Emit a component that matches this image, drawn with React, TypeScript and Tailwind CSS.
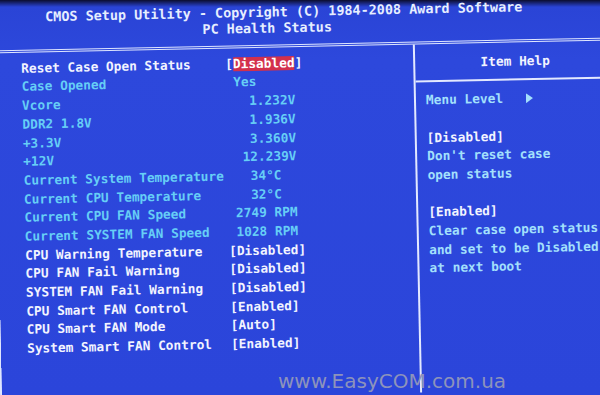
import React from 'react';

type Row = { label: string; value: string; tone: 'white' | 'cyan'; selected?: boolean };

const rows: Row[] = [
  { label: 'Reset Case Open Status', value: '[Disabled]', tone: 'white', selected: true },
  { label: 'Case Opened', value: ' Yes', tone: 'cyan' },
  { label: 'Vcore', value: '   1.232V', tone: 'cyan' },
  { label: 'DDR2 1.8V', value: '   1.936V', tone: 'cyan' },
  { label: '+3.3V', value: '   3.360V', tone: 'cyan' },
  { label: '+12V', value: '  12.239V', tone: 'cyan' },
  { label: 'Current System Temperature', value: '   34°C', tone: 'cyan' },
  { label: 'Current CPU Temperature', value: '   32°C', tone: 'cyan' },
  { label: 'Current CPU FAN Speed', value: ' 2749 RPM', tone: 'cyan' },
  { label: 'Current SYSTEM FAN Speed', value: ' 1028 RPM', tone: 'cyan' },
  { label: 'CPU Warning Temperature', value: '[Disabled]', tone: 'white' },
  { label: 'CPU FAN Fail Warning', value: '[Disabled]', tone: 'white' },
  { label: 'SYSTEM FAN Fail Warning', value: '[Disabled]', tone: 'white' },
  { label: 'CPU Smart FAN Control', value: '[Enabled]', tone: 'white' },
  { label: 'CPU Smart FAN Mode', value: '[Auto]', tone: 'white' },
  { label: 'System Smart FAN Control', value: '[Enabled]', tone: 'white' },
];

// help panel lines, '' = blank row
const help: { text: string; white?: boolean }[] = [
  { text: '' },
  { text: '[Disabled]', white: true },
  { text: "Don't reset case" },
  { text: 'open status' },
  { text: '' },
  { text: '[Enabled]', white: true },
  { text: 'Clear case open status' },
  { text: 'and set to be Disabled' },
  { text: 'at next boot' },
];

const SettingRow: React.FC<{ row: Row }> = ({ row }) => {
  const color = row.tone === 'white' ? 'text-[#f2f4ff]' : 'text-[#66cef6]';
  return (
    <div className={`flex h-[18.7px] items-center whitespace-pre ${color}`}>
      <span className="w-[204px] shrink-0">{row.label}</span>
      {row.selected ? (
        <span className="text-[#f2f4ff]">
          [<span className="inline-block h-[14px] bg-[#d3304c] leading-[14px] text-white">Disabled</span>]
        </span>
      ) : (
        <span>{row.value}</span>
      )}
    </div>
  );
};

const App: React.FC = () => {
  return (
    <div className="relative h-[395px] w-[600px] overflow-hidden bg-[linear-gradient(to_bottom,#0b0d2e_0px,#2a44d6_7px,#2d48dc_60px,#2b45da_395px)] font-['DejaVu_Sans_Mono',monospace] text-[12.8px] font-bold">
      <div className="flex h-[395px] w-[600px] rotate-[-1.2deg] flex-col">
        {/* Title */}
        <div className="whitespace-pre pt-[4px] text-[13.45px] leading-[16px] text-[#e6eeff]">
          <div className="pl-[49px]">CMOS Setup Utility - Copyright (C) 1984-2008 Award Software</div>
          <div className="pl-[206px]">PC Health Status</div>
        </div>

        {/* Frame */}
        <div className="-ml-[4px] mt-[8px] flex w-[622px] flex-1 border-l-2 border-t-[3px] border-double border-[#dfe6ff]">
          <div className="w-[420px] shrink-0 border-r-2 border-solid border-[#e3e9ff] pl-[26px] pt-[6px]">
            {rows.map((r) => (
              <SettingRow key={r.label} row={r} />
            ))}
          </div>

          <div className="flex-1 pt-[9px]">
            <div className="flex h-[18.7px] items-center justify-center text-[#f2f4ff]">Item Help</div>
            <div className="flex h-[18.7px] items-center">
              <div className="h-[2px] w-full bg-[#e3e9ff]" />
            </div>
            <div className="flex h-[18.7px] items-center whitespace-pre pl-[10px] text-[#a3e0fc]">
              <span>Menu Level   </span>
              <svg width="7" height="10" viewBox="0 0 7 10">
                <path d="M0 0 L7 5 L0 10 Z" fill="#a3e0fc" />
              </svg>
            </div>
            {help.map((h, i) => (
              <div
                key={i}
                className={`flex h-[18.7px] items-center whitespace-pre pl-[10px] ${h.white ? 'text-[#f2f4ff]' : 'text-[#a3e0fc]'}`}
              >
                {h.text}
              </div>
            ))}
          </div>
        </div>
      </div>

      {/* watermark */}
      <div className="absolute left-[278px] top-[370px] font-['DejaVu_Sans',sans-serif] text-[20px] font-normal leading-[22px] text-[#8d93bb]">
        www.EasyCOM.com.ua
      </div>
    </div>
  );
};

export default App;
